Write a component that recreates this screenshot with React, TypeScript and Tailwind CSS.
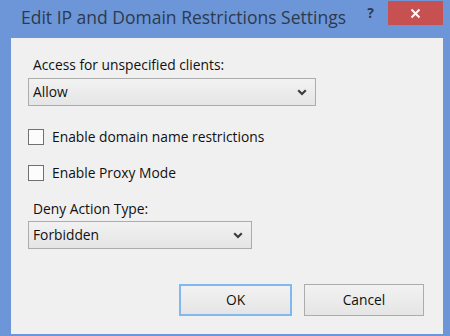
import React from "react";

function Chevron() {
  return (
    <svg width="10" height="7" viewBox="0 0 10 7" className="shrink-0">
      <path d="M1.2 1.3 L5 5 L8.8 1.3" fill="none" stroke="#3c3c3c" strokeWidth="2.2" />
    </svg>
  );
}

function Select({ value, width }: { value: string; width: string }) {
  return (
    <div
      className={`${width} flex h-[28px] items-center justify-between border border-[#acacac] bg-gradient-to-b from-[#f2f2f2] to-[#e5e5e5] pl-[4px] pr-[8px] text-[#111]`}
    >
      <span>{value}</span>
      <Chevron />
    </div>
  );
}

function Check({ label }: { label: string }) {
  return (
    <div className="flex items-center gap-[8px]">
      <div className="h-[16px] w-[16px] border border-[#707070] bg-[#fcfcfc]" />
      <span className="text-[#111]">{label}</span>
    </div>
  );
}

export default function App() {
  return (
    <div
      className="flex h-[336px] w-[450px] flex-col overflow-hidden bg-[#6d96d8]"
      style={{ fontFamily: '"Open Sans", "Noto Sans", sans-serif' }}
    >
      {/* title bar */}
      <div className="flex h-[38px] shrink-0 items-start">
        <div className="pl-[21px] pt-[5px] text-[17.5px] leading-[24px] text-[#2c3a4e]">
          Edit IP and Domain Restrictions Settings
        </div>
        <div className="ml-auto pt-[4px] pr-[14px] text-[14px] font-bold leading-[18px] text-[#2c3a4e]">?</div>
        <div className="mr-[7px] mt-[1px] flex h-[24px] w-[55px] items-center justify-center bg-[#c75050]">
          <svg width="11" height="11" viewBox="0 0 11 11">
            <path d="M1.5 1.5 L9.5 9.5 M9.5 1.5 L1.5 9.5" stroke="#ffffff" strokeWidth="2" />
          </svg>
        </div>
      </div>

      {/* client area */}
      <div className="mx-[11px] mr-[7px] flex h-[296px] flex-col bg-[#f0f0f0] pl-[17px] pt-[18px] text-[13.8px] leading-[18px]">
        <div className="pl-[5px] text-[#111]">Access for unspecified clients:</div>
        <div className="mt-[4px]">
          <Select value="Allow" width="w-[288px]" />
        </div>

        <div className="mt-[22px]">
          <Check label="Enable domain name restrictions" />
        </div>
        <div className="mt-[18px]">
          <Check label="Enable Proxy Mode" />
        </div>

        <div className="mt-[18px] pl-[5px] text-[#111]">Deny Action Type:</div>
        <div className="mt-[3px]">
          <Select value="Forbidden" width="w-[224px]" />
        </div>

        <div className="mt-[35px] flex gap-[12px] pl-[151px]">
          <div className="flex h-[32px] w-[113px] items-center justify-center border-2 border-[#80b8ef] bg-gradient-to-b from-[#f2f2f2] to-[#e5e5e5] text-[#111]">
            OK
          </div>
          <div className="flex h-[32px] w-[120px] items-center justify-center border border-[#acacac] bg-gradient-to-b from-[#f2f2f2] to-[#e5e5e5] text-[#111]">
            Cancel
          </div>
        </div>
      </div>
    </div>
  );
}
